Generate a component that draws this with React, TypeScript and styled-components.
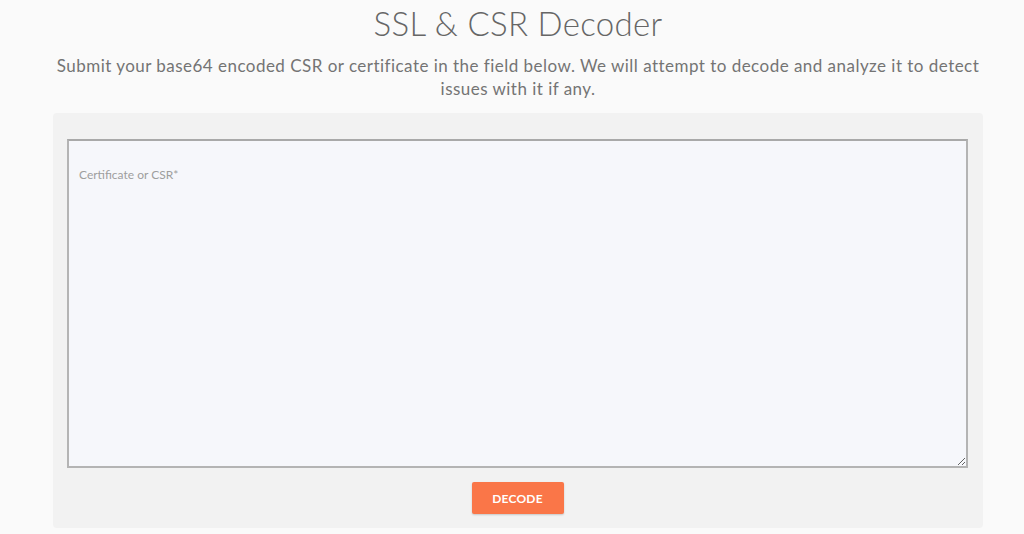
import React from 'react'
import styled, { createGlobalStyle } from 'styled-components'

const GlobalStyle = createGlobalStyle`
  html, body {
    margin: 0;
    padding: 0;
    background: #fafafa;
    font-family: Lato, "Open Sans", "Liberation Sans", sans-serif;
    color: #666;
  }
`

const Page = styled.div`
  width: 930px;
  margin: 0 41px 0 53px;
  padding-top: 3px;
`

const Title = styled.h1`
  margin: 0;
  text-align: center;
  font-size: 33px;
  font-weight: 300;
  line-height: 40px;
  color: #666;
  letter-spacing: 0.3px;
`

const Intro = styled.p`
  margin: 11px 0 13px;
  text-align: center;
  font-size: 17px;
  font-weight: 400;
  letter-spacing: 0.47px;
  line-height: 23px;
  color: #747474;
`

const Panel = styled.form`
  display: flex;
  flex-direction: column;
  align-items: center;
  gap: 14px;
  padding: 26px 15px 14px 14px;
  background: #f2f2f2;
  border-radius: 4px;
`

const Field = styled.textarea`
  box-sizing: border-box;
  width: 100%;
  height: 329px;
  padding: 26px 10px;
  border: 2px solid #b4b4b4;
  border-top-color: #a9a9a9;
  background: #f6f7fb;
  font-family: inherit;
  font-size: 12px;
  color: #555;
  outline: none;

  &::placeholder {
    color: #9e9e9e;
  }
`

const DecodeButton = styled.button`
  width: 92px;
  height: 32px;
  border: 0;
  border-radius: 2px;
  background: #fa7648;
  color: #fff;
  font-family: inherit;
  font-size: 12px;
  font-weight: 700;
  letter-spacing: 0.2px;
  box-shadow: 0 1px 2px rgba(0, 0, 0, 0.18);
  cursor: pointer;
`

const App: React.FC = () => (
  <>
    <GlobalStyle />
    <Page>
      <Title>SSL &amp; CSR Decoder</Title>
      <Intro>
        Submit your base64 encoded CSR or certificate in the field below. We will attempt to decode and analyze it to
        detect issues with it if any.
      </Intro>
      <Panel onSubmit={e => e.preventDefault()}>
        <Field placeholder="Certificate or CSR*" />
        <DecodeButton type="submit">DECODE</DecodeButton>
      </Panel>
    </Page>
  </>
)

export default App
